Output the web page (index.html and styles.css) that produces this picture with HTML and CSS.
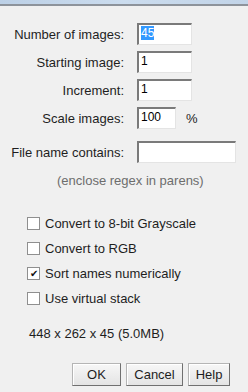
FILE: index.html
```html
<!DOCTYPE html>
<html>
<head>
    <title>Sequence Options</title>
    <link rel="stylesheet" href="styles.css">
</head>
<body>
    <div class="titlebar"></div>
    <div class="dialog">
        <div class="fields">
            <div class="row">
                <label class="label">Number of images:</label>
                <div class="field w55"><span class="sel">45</span></div>
            </div>
            <div class="row">
                <label class="label">Starting image:</label>
                <div class="field w55">1</div>
            </div>
            <div class="row">
                <label class="label">Increment:</label>
                <div class="field w55">1</div>
            </div>
            <div class="row">
                <label class="label">Scale images:</label>
                <div class="field w39">100</div>
                <span class="unit">%</span>
            </div>
            <div class="row row-gap">
                <label class="label">File name contains:</label>
                <div class="field w99"></div>
            </div>
        </div>

        <div class="note">(enclose regex in parens)</div>

        <div class="checks">
            <div class="check"><span class="box"></span>Convert to 8-bit Grayscale</div>
            <div class="check"><span class="box"></span>Convert to RGB</div>
            <div class="check"><span class="box checked">&#10004;</span>Sort names numerically</div>
            <div class="check"><span class="box"></span>Use virtual stack</div>
        </div>

        <div class="info">448 x 262 x 45 (5.0MB)</div>

        <div class="buttons">
            <button class="btn ok">OK</button>
            <button class="btn cancel">Cancel</button>
            <button class="btn help">Help</button>
        </div>
    </div>
</body>
</html>
```

FILE: styles.css
```css
* {
    margin: 0;
    padding: 0;
    box-sizing: border-box;
}

body {
    width: 248px;
    height: 392px;
    overflow: hidden;
    background: #f0f0f0;
    color: #1e1e1e;
    font-family: "Liberation Sans", Arial, sans-serif;
    font-size: 13px;
}

.titlebar {
    height: 6px;
    background: linear-gradient(90deg, #bcd0e6, #cbdcee 50%, #c2d4e8);
    border-bottom: 2px solid #8d939b;
}

.dialog {
    padding-top: 17px;
}

/* numeric fields */
.fields {
    display: flex;
    flex-direction: column;
    gap: 6px;
}

.row {
    display: flex;
    align-items: center;
    height: 22px;
}

.row-gap {
    margin-top: 6px;
}

.label {
    width: 124px;
    text-align: right;
    margin-right: 13px;
}

.field {
    height: 22px;
    background: #fff;
    border-top: 2px solid #7a7a7a;
    border-left: 2px solid #7a7a7a;
    border-right: 1px solid #e4e4e4;
    border-bottom: 1px solid #e4e4e4;
    padding: 1px 0 0 2px;
    font-size: 12px;
    line-height: 14px;
    color: #000;
}

.w55 { width: 55px; }
.w39 { width: 39px; }
.w99 { width: 99px; }

.sel {
    background: #3399ff;
    color: #fff;
}

.unit {
    margin-left: 10px;
}

.note {
    margin-top: 11px;
    padding-left: 57px;
    line-height: 14px;
    color: #6d6d6d;
}

/* checkboxes */
.checks {
    margin-top: 23px;
    padding-left: 27px;
}

.check {
    display: flex;
    align-items: center;
    height: 25px;
}

.box {
    width: 13px;
    height: 13px;
    margin-right: 5px;
    background: #fff;
    border: 1px solid #8f8f8f;
    display: flex;
    align-items: center;
    justify-content: center;
    font-size: 10px;
    line-height: 1;
    color: #111;
}

.info {
    margin-top: 16px;
    padding-left: 29px;
    line-height: 14px;
}

/* buttons */
.buttons {
    display: flex;
    justify-content: flex-end;
    gap: 5px;
    margin-top: 22px;
    padding-right: 18px;
}

.btn {
    height: 23px;
    font-family: inherit;
    font-size: 13px;
    color: #1e1e1e;
    background: linear-gradient(#f7f7f7, #e4e4e4);
    border: 1px solid #b5b5b5;
    border-right-color: #707070;
    border-bottom-color: #707070;
    box-shadow: inset 1px 1px 0 #fff;
}

.ok { width: 49px; }
.cancel { width: 57px; }
.help { width: 42px; }
```
